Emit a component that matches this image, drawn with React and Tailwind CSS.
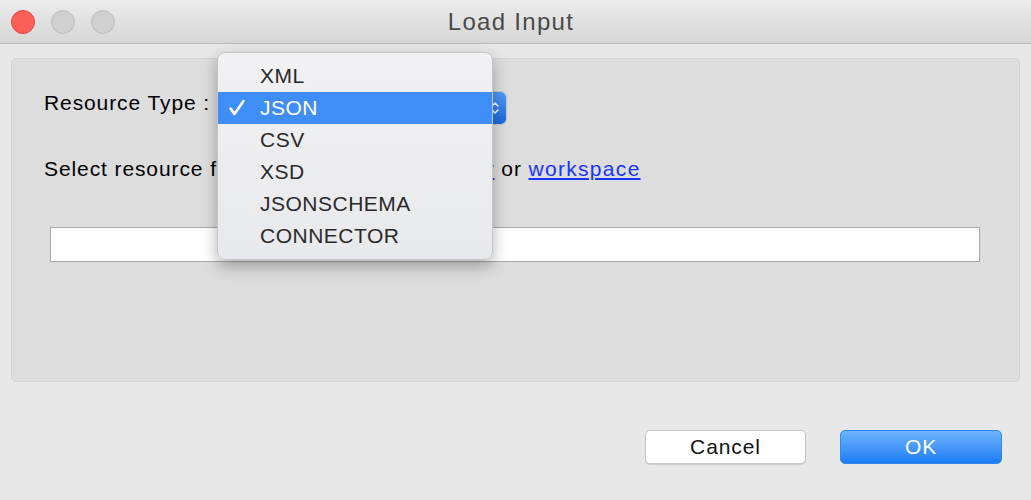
const menuItems = ['XML', 'JSON', 'CSV', 'XSD', 'JSONSCHEMA', 'CONNECTOR'];

function TrafficLight({ color }) {
  return <div className={`w-[24px] h-[24px] rounded-full border ${color}`} />;
}

function CheckMark() {
  return (
    <svg width="18" height="18" viewBox="0 0 18 18" fill="none">
      <path d="M2.5 9.5 L6.5 15 L15.5 2" stroke="white" strokeWidth="2.6" strokeLinecap="round" strokeLinejoin="round" />
    </svg>
  );
}

function UpDown() {
  return (
    <svg width="10" height="18" viewBox="0 0 10 18" fill="none">
      <path d="M2 7 L5 4 L8 7 M2 11 L5 14 L8 11" stroke="white" strokeWidth="1.5" strokeLinecap="round" strokeLinejoin="round" />
    </svg>
  );
}

export default function App() {
  const selected = 'JSON';

  return (
    <div
      className="relative w-[1031px] h-[500px] overflow-hidden bg-[#e8e8e8] flex flex-col"
      style={{ fontFamily: '"Liberation Sans", Arial, sans-serif' }}
    >
      {/* Title bar */}
      <div className="relative h-[44px] shrink-0 flex items-center gap-[16px] px-[11px] bg-gradient-to-b from-[#ececec] to-[#d6d6d6] border-b border-[#b9b9b9]">
        <TrafficLight color="bg-[#fc5f57] border-[#e0443e]" />
        <TrafficLight color="bg-[#d0d0d0] border-[#bdbdbd]" />
        <TrafficLight color="bg-[#d0d0d0] border-[#bdbdbd]" />
        <div className="absolute inset-0 pr-[9px] flex items-center justify-center text-[24px] tracking-[1.3px] text-[#4a4a4a] pointer-events-none">
          Load Input
        </div>
      </div>

      {/* Content panel */}
      <div className="px-[11px] pt-[14px]">
        <div className="h-[324px] bg-[#dddddd] border border-[#d4d4d4] rounded-[5px] pl-[32px] pr-[39px] pt-[32px] text-[21px] tracking-[0.9px] text-black">
          <div className="flex items-start h-[34px]">
            <span className="w-[174px] -mt-[4px]">Resource Type :</span>
            <div className="w-[289px] h-[34px] rounded-[5px] bg-white border border-[#c8c8c8] flex justify-end">
              <div className="w-[22px] h-full rounded-r-[5px] bg-gradient-to-b from-[#4f9bf7] to-[#1b66e0] flex items-center justify-center">
                <UpDown />
              </div>
            </div>
          </div>

          <div className="mt-[32px] h-[24px] flex items-center whitespace-nowrap">
            <span>Select resource from&nbsp;</span>
            <a className="text-[#1733ff] underline">file system</a>
            <span>&nbsp;or&nbsp;</span>
            <a className="text-[#1733ff] underline ml-[13px]">registry</a>
            <span>&nbsp;or&nbsp;</span>
            <a className="text-[#1733ff] underline tracking-[1.3px]">workspace</a>
          </div>

          <div className="mt-[46px] ml-[6px] h-[35px] bg-white border border-[#aaaaaa]" />
        </div>
      </div>

      {/* Footer buttons */}
      <div className="flex justify-end gap-[34px] pr-[29px] mt-[48px] text-[21px] tracking-[0.9px]">
        <button className="w-[161px] h-[34px] rounded-[5px] bg-white border border-[#c6c6c6] shadow-[0_1px_1px_rgba(0,0,0,0.12)] text-[#111]">
          Cancel
        </button>
        <button className="w-[162px] h-[34px] rounded-[5px] bg-gradient-to-b from-[#6cb3fa] to-[#1a7cf6] border border-[#2f86f0] text-white">
          OK
        </button>
      </div>

      {/* Dropdown menu */}
      <div className="absolute left-[217px] top-[52px] w-[276px] py-[7px] rounded-[8px] bg-gradient-to-b from-[#f1f1f3] to-[#e8e9ec] border border-[#c5c5c5] shadow-[0_6px_16px_rgba(0,0,0,0.3)] text-[21px] tracking-[0.5px]">
        {menuItems.map((item) => {
          const active = item === selected;
          return (
            <div
              key={item}
              className={`h-[32px] flex items-center ${
                active ? 'bg-[#3f8ef7] text-white' : 'text-[#2a2a2a]'
              }`}
            >
              <span className="w-[42px] pl-[10px] flex items-center">{active && <CheckMark />}</span>
              {item}
            </div>
          );
        })}
      </div>
    </div>
  );
}
